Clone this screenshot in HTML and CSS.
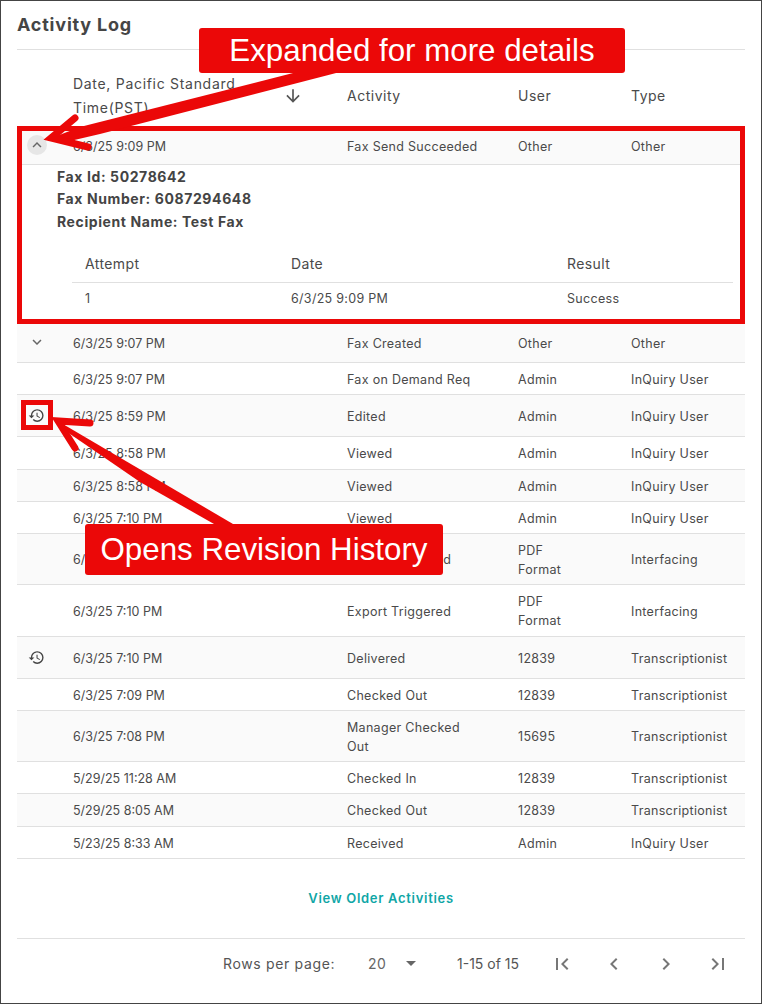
FILE: index.html
```html
<!DOCTYPE html>
<html lang="en">
<head>
<meta charset="utf-8">
<title>Activity Log</title>
<link rel="stylesheet" href="styles.css">
</head>
<body>
<main class="frame">
  <h1 class="title">Activity Log</h1>
  <table class="log">
    <colgroup><col class="c-icon"><col class="c-date"><col class="c-activity"><col class="c-user"><col class="c-type"></colgroup>
    <thead>
      <tr class="h77">
        <th></th>
        <th><div class="date-head"><span class="date-label">Date, Pacific Standard Time(PST)</span><svg class="sort" viewBox="0 0 24 24"><path d="M20 12l-1.41-1.41L13 16.17V4h-2v12.17l-5.58-5.59L4 12l8 8 8-8z"/></svg></div></th>
        <th>Activity</th><th>User</th><th>Type</th>
      </tr>
    </thead>
    <tbody>
      <tr class="h37 alt"><td><span class="round"><svg class="ico" viewBox="0 0 24 24"><path d="M12 8l-6 6 1.41 1.41L12 10.83l4.59 4.58L18 14z"/></svg></span></td><td>6/3/25 9:09 PM</td><td>Fax Send Succeeded</td><td>Other</td><td>Other</td></tr>
      <tr class="detail-row"><td colspan="5">
        <div class="detail">
          <p>Fax Id: 50278642</p>
          <p>Fax Number: 6087294648</p>
          <p>Recipient Name: Test Fax</p>
        </div>
        <table class="attempts">
          <colgroup><col class="a-1"><col class="a-2"><col class="a-3"></colgroup>
          <thead><tr><th>Attempt</th><th>Date</th><th>Result</th></tr></thead>
          <tbody><tr><td>1</td><td>6/3/25 9:09 PM</td><td>Success</td></tr></tbody>
        </table>
      </td></tr>
      <tr class="h39 alt"><td><span class="round plain"><svg class="ico" viewBox="0 0 24 24"><path d="M16.59 8.59L12 13.17 7.41 8.59 6 10l6 6 6-6z"/></svg></span></td><td>6/3/25 9:07 PM</td><td>Fax Created</td><td>Other</td><td>Other</td></tr>
      <tr class="h32"><td></td><td>6/3/25 9:07 PM</td><td>Fax on Demand Req</td><td>Admin</td><td>InQuiry User</td></tr>
      <tr class="h42 alt"><td><svg class="hist" viewBox="0 0 24 24"><path d="M13 3a9 9 0 0 0-9 9H1l3.89 3.89.07.14L9 12H6c0-3.87 3.13-7 7-7s7 3.13 7 7-3.13 7-7 7c-1.93 0-3.68-.79-4.94-2.06l-1.42 1.42A8.954 8.954 0 0 0 13 21a9 9 0 0 0 0-18zm-1 5v5l4.28 2.54.72-1.21-3.5-2.08V8H12z"/></svg></td><td>6/3/25 8:59 PM</td><td>Edited</td><td>Admin</td><td>InQuiry User</td></tr>
      <tr class="h33"><td></td><td>6/3/25 8:58 PM</td><td>Viewed</td><td>Admin</td><td>InQuiry User</td></tr>
      <tr class="h32 alt"><td></td><td>6/3/25 8:58 PM</td><td>Viewed</td><td>Admin</td><td>InQuiry User</td></tr>
      <tr class="h32"><td></td><td>6/3/25 7:10 PM</td><td>Viewed</td><td>Admin</td><td>InQuiry User</td></tr>
      <tr class="h51 alt"><td></td><td>6/3/25 7:10 PM</td><td>Export Triggered</td><td class="wrap">PDF Format</td><td>Interfacing</td></tr>
      <tr class="h52"><td></td><td>6/3/25 7:10 PM</td><td>Export Triggered</td><td class="wrap">PDF Format</td><td>Interfacing</td></tr>
      <tr class="h42 alt"><td><svg class="hist" viewBox="0 0 24 24"><path d="M13 3a9 9 0 0 0-9 9H1l3.89 3.89.07.14L9 12H6c0-3.87 3.13-7 7-7s7 3.13 7 7-3.13 7-7 7c-1.93 0-3.68-.79-4.94-2.06l-1.42 1.42A8.954 8.954 0 0 0 13 21a9 9 0 0 0 0-18zm-1 5v5l4.28 2.54.72-1.21-3.5-2.08V8H12z"/></svg></td><td>6/3/25 7:10 PM</td><td>Delivered</td><td>12839</td><td>Transcriptionist</td></tr>
      <tr class="h32"><td></td><td>6/3/25 7:09 PM</td><td>Checked Out</td><td>12839</td><td>Transcriptionist</td></tr>
      <tr class="h51 alt"><td></td><td>6/3/25 7:08 PM</td><td class="wrap-activity">Manager Checked Out</td><td>15695</td><td>Transcriptionist</td></tr>
      <tr class="h32"><td></td><td>5/29/25 11:28 AM</td><td>Checked In</td><td>12839</td><td>Transcriptionist</td></tr>
      <tr class="h33 alt"><td></td><td>5/29/25 8:05 AM</td><td>Checked Out</td><td>12839</td><td>Transcriptionist</td></tr>
      <tr class="h32"><td></td><td>5/23/25 8:33 AM</td><td>Received</td><td>Admin</td><td>InQuiry User</td></tr>
    </tbody>
  </table>
  <div class="older"><a class="older-link">View Older Activities</a></div>
  <footer class="pager">
    <span class="rows-label">Rows per page:</span>
    <span class="rows-value">20</span>
    <span class="caret"></span>
    <span class="range">1-15 of 15</span>
    <div class="nav-group">
      <svg class="nav" viewBox="0 0 24 24"><path d="M18.41 16.59L13.82 12l4.59-4.59L17 6l-6 6 6 6zM6 6h2v12H6z"/></svg>
      <svg class="nav" viewBox="0 0 24 24"><path d="M15.41 7.41L14 6l-6 6 6 6 1.41-1.41L10.83 12z"/></svg>
      <svg class="nav" viewBox="0 0 24 24"><path d="M10 6L8.59 7.41 13.17 12l-4.58 4.59L10 18l6-6z"/></svg>
      <svg class="nav" viewBox="0 0 24 24"><path d="M5.59 7.41L10.18 12l-4.59 4.59L7 18l6-6-6-6zM16 6h2v12h-2z"/></svg>
    </div>
  </footer>

  <div class="mark mark-expanded"></div>
  <div class="mark mark-history"></div>
  <svg class="arrows" viewBox="0 0 762 1004">
    <polygon points="49,139 80,127 297,72 340,72 100,134 70,141"/>
    <polyline points="75,118 51,138 88,147"/>
    <polygon points="56,420 233,524 214,524 140,482 70,434"/>
    <polyline points="90,423 58,421 75,448"/>
  </svg>
  <div class="callout callout-top">Expanded for more details</div>
  <div class="callout callout-bottom">Opens Revision History</div>
</main>
</body>
</html>
```
FILE: styles.css
```css
* { box-sizing: border-box; }
html, body { margin: 0; padding: 0; }
body { background: #fff; font-family: Inter, "Open Sans", sans-serif; color: #4a4a4a; }
.frame { position: relative; width: 762px; height: 1004px; border: 1px solid #444; padding: 0 16px; overflow: hidden; }
.title { margin: 0; height: 49px; padding-top: 13px; font-size: 18px; line-height: 22px; font-weight: 700; color: #454545; border-bottom: 1px solid #e0e0e0; letter-spacing: .8px; }
.log { width: 728px; border-collapse: collapse; table-layout: fixed; font-size: 12.5px; letter-spacing: .3px; }
.c-icon { width: 56px; }
.c-date { width: 274px; }
.c-activity { width: 171px; }
.c-user { width: 113px; }
.c-type { width: 114px; }
.log > thead th { font-weight: 400; font-size: 14px; text-align: left; padding: 14px 0 0; letter-spacing: .5px; }
.log > tbody > tr > td { padding: 2px 0 0; border-bottom: 1px solid #e0e0e0; vertical-align: middle; }
.log > tbody > tr > td:nth-child(2) { letter-spacing: 0; }
.date-head { display: flex; align-items: center; width: 230px; }
.date-label { width: 190px; line-height: 24px; letter-spacing: .7px; }
.sort { width: 20px; height: 20px; margin-left: 20px; fill: #555; flex: none; }
.alt { background: #fafafa; }
.h77 { height: 77px; }
.h37 { height: 37px; }
.h39 { height: 39px; }
.h32 { height: 32px; }
.h33 { height: 33px; }
.h42 { height: 42px; }
.h51 { height: 51px; }
.h52 { height: 52px; }
.round { display: flex; align-items: center; justify-content: center; width: 20px; height: 20px; margin: -2px 0 0 10px; border-radius: 50%; background: #e6e6e6; }
.round.plain { background: none; }
.ico { width: 18px; height: 18px; fill: #666; }
.hist { display: block; width: 17px; height: 17px; margin: -2px 0 0 11px; fill: #444; }
.log > tbody > tr > .wrap { line-height: 19px; padding-right: 70px; }
.log > tbody > tr > .wrap-activity { line-height: 19px; padding-right: 40px; }
.log > tbody > .detail-row > td { height: 159px; padding: 0; border-bottom: none; vertical-align: top; letter-spacing: .3px; }
.detail { padding: 1px 0 0 40px; }
.detail p { margin: 0; height: 22.5px; line-height: 22px; font-size: 14px; font-weight: 700; color: #444; letter-spacing: .6px; }
.attempts { margin: 16px 0 0 55px; width: 661px; border-collapse: collapse; table-layout: fixed; }
.a-1 { width: 219px; }
.a-2 { width: 276px; }
.a-3 { width: 166px; }
.attempts th { height: 33px; padding: 0 0 4px 13px; text-align: left; font-weight: 400; font-size: 14px; letter-spacing: .4px; border-bottom: 1px solid #e0e0e0; }
.attempts td { height: 33px; padding: 0 0 0 13px; }
.attempts th + th, .attempts td + td { padding-left: 0; }
.older { height: 80px; display: flex; align-items: center; justify-content: center; border-bottom: 1px solid #e0e0e0; }
.older-link { color: #0fa6a6; font-size: 13px; font-weight: 600; letter-spacing: .7px; }
.pager { display: flex; align-items: center; height: 50px; padding-left: 206px; font-size: 14px; color: #555; }
.rows-label { flex: none; width: 145px; letter-spacing: .65px; }
.rows-value { flex: none; width: 38px; color: #666; letter-spacing: .4px; }
.caret { flex: none; width: 0; height: 0; border-left: 5.5px solid transparent; border-right: 5.5px solid transparent; border-top: 5px solid #666; margin-right: 41px; }
.range { flex: none; width: 93px; }
.nav-group { display: flex; gap: 28px; }
.nav { width: 24px; height: 24px; fill: #777; flex: none; }
.mark { position: absolute; border: 5px solid #eb0808; }
.mark-expanded { left: 16px; top: 125px; width: 728px; height: 198px; }
.mark-history { left: 20px; top: 399px; width: 32px; height: 30px; }
.arrows { position: absolute; left: -1px; top: -1px; width: 762px; height: 1004px; }
.arrows polygon { fill: #eb0808; }
.arrows polyline { fill: none; stroke: #eb0808; stroke-width: 7; stroke-linecap: round; stroke-linejoin: miter; }
.callout { position: absolute; display: flex; align-items: center; justify-content: center; background: #eb0808; color: #fff; border-radius: 3px; font-family: "Liberation Sans", Arial, sans-serif; font-size: 31.3px; white-space: nowrap; }
.callout-top { left: 198px; top: 27px; width: 426px; height: 45px; }
.callout-bottom { left: 84px; top: 523px; width: 358px; height: 51px; }
```
